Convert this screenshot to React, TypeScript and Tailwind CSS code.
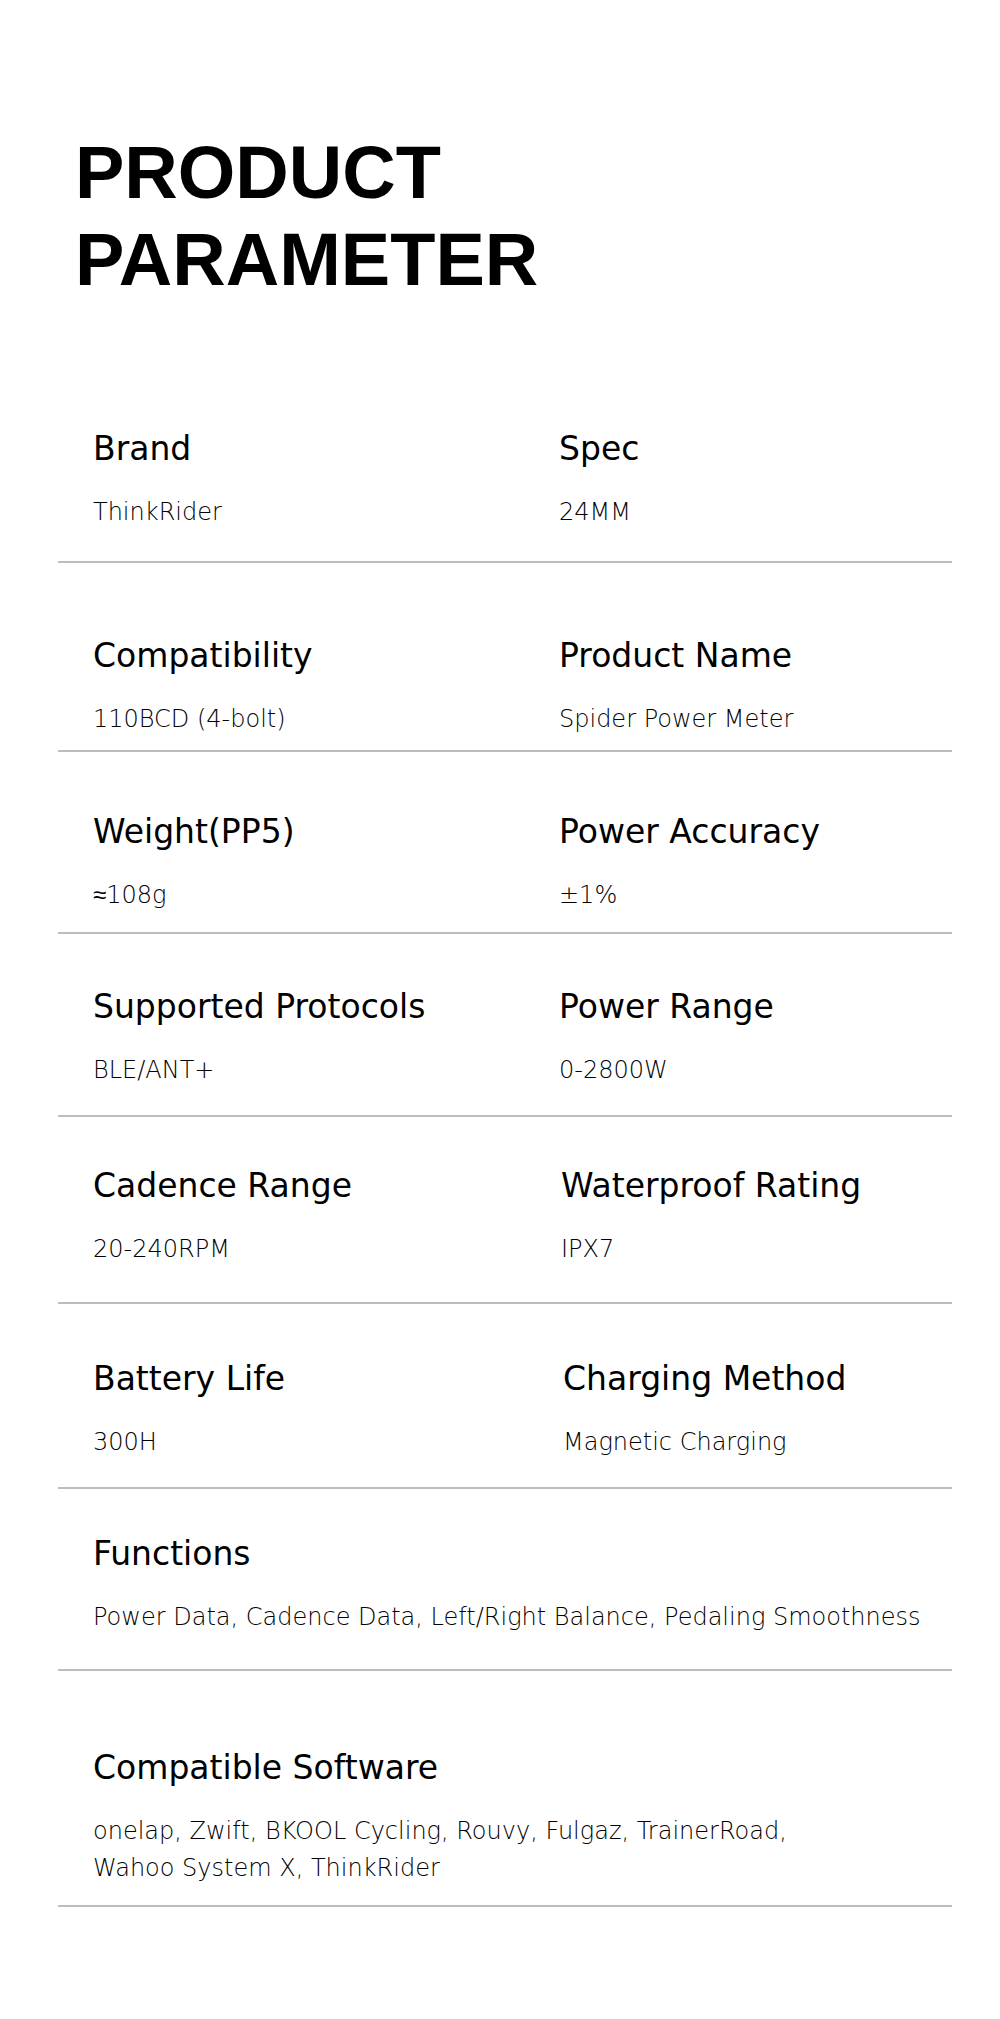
import React from "react";

type Row = {
  cells: { label: string; value: string[] }[];
  pt: string;
  pb: string;
  shift?: string;
};

// spacing per row is uneven in the source, so each row carries its own padding
const ROWS: Row[] = [
  { cells: [{ label: "Brand", value: ["ThinkRider"] }, { label: "Spec", value: ["24MM"] }], pt: "pt-0", pb: "pb-[30px]" },
  {
    cells: [
      { label: "Compatibility", value: ["110BCD (4-bolt)"] },
      { label: "Product Name", value: ["Spider Power Meter"] },
    ],
    pt: "pt-[73px]",
    pb: "pb-[12px]",
  },
  {
    cells: [
      { label: "Weight(PP5)", value: ["≈108g"] },
      { label: "Power Accuracy", value: ["±1%"] },
    ],
    pt: "pt-[60px]",
    pb: "pb-[18px]",
  },
  {
    cells: [
      { label: "Supported Protocols", value: ["BLE/ANT+"] },
      { label: "Power Range", value: ["0-2800W"] },
    ],
    pt: "pt-[53px]",
    pb: "pb-[26px]",
  },
  {
    cells: [
      { label: "Cadence Range", value: ["20-240RPM"] },
      { label: "Waterproof Rating", value: ["IPX7"] },
    ],
    pt: "pt-[49px]",
    pb: "pb-[34px]",
    shift: "pl-[2px]",
  },
  {
    cells: [
      { label: "Battery Life", value: ["300H"] },
      { label: "Charging Method", value: ["Magnetic Charging"] },
    ],
    pt: "pt-[55px]",
    pb: "pb-[26px]",
    shift: "pl-[4px]",
  },
  {
    cells: [
      {
        label: "Functions",
        value: ["Power Data, Cadence Data, Left/Right Balance, Pedaling Smoothness"],
      },
    ],
    pt: "pt-[45px]",
    pb: "pb-[33px]",
  },
  {
    cells: [
      {
        label: "Compatible Software",
        value: ["onelap, Zwift, BKOOL Cycling, Rouvy, Fulgaz, TrainerRoad,", "Wahoo System X, ThinkRider"],
      },
    ],
    pt: "pt-[77px]",
    pb: "pb-[18px]",
  },
];

function Cell({ label, value }: { label: string; value: string[] }) {
  return (
    <div>
      <p className="text-[33px] leading-[40px] text-black">{label}</p>
      <div className="mt-[25px] text-[24px] leading-[37px] font-extralight text-black">
        {value.map((v) => (
          <p key={v} className="whitespace-nowrap">
            {v}
          </p>
        ))}
      </div>
    </div>
  );
}

export default function App() {
  return (
    <div className="min-h-[2019px] bg-white pl-[58px] pr-[48px] pt-[129px] font-['DejaVu_Sans',sans-serif]">
      <h1 className="ml-[17px] mb-[126px] font-['Liberation_Sans',Arial,sans-serif] text-[74px] leading-[87px] font-bold text-black">
        PRODUCT
        <br />
        PARAMETER
      </h1>

      <div>
        {ROWS.map((row, i) => (
          <div
            key={i}
            className={`border-b-2 border-[#bdbdbd] pl-[35px] ${row.pt} ${row.pb} ${
              row.cells.length > 1 ? "grid grid-cols-[466px_1fr]" : ""
            }`}
          >
            <Cell {...row.cells[0]} />
            {row.cells[1] && (
              <div className={row.shift ?? ""}>
                <Cell {...row.cells[1]} />
              </div>
            )}
          </div>
        ))}
      </div>
    </div>
  );
}
